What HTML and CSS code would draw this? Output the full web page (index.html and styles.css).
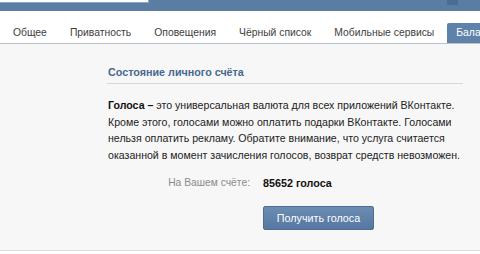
FILE: index.html
```html
<!DOCTYPE html>
<html lang="ru">
<head>
<meta charset="utf-8">
<link rel="stylesheet" href="styles.css">
</head>
<body>
<div class="header">
  <div class="search"></div>
  <div class="header-btn"></div>
</div>
<div class="tabs">
  <div class="tab">Общее</div>
  <div class="tab">Приватность</div>
  <div class="tab">Оповещения</div>
  <div class="tab">Чёрный список</div>
  <div class="tab">Мобильные сервисы</div>
  <div class="tab active">Баланс</div>
</div>
<div class="content">
  <div class="panel">
    <div class="title">Состояние личного счёта</div>
    <p class="text"><b>Голоса –</b> это универсальная валюта для всех приложений ВКонтакте.<br>Кроме этого, голосами можно оплатить подарки ВКонтакте. Голосами<br>нельзя оплатить рекламу. Обратите внимание, что услуга считается<br>оказанной в момент зачисления голосов, возврат средств невозможен.</p>
    <div class="balance">
      <span class="label">На Вашем счёте:</span>
      <span class="value">85652 голоса</span>
    </div>
    <div class="actions">
      <button class="btn">Получить голоса</button>
    </div>
  </div>
</div>
</body>
</html>
```
FILE: styles.css
```css
* { box-sizing: border-box; }
html, body { margin: 0; padding: 0; }
body {
  width: 480px;
  height: 254px;
  overflow: hidden;
  background: #fff;
  font-family: "Liberation Sans", Arial, sans-serif;
  font-size: 10.75px;
  color: #222;
}
.header {
  height: 11px;
  background: #5b7da4;
  display: flex;
  align-items: flex-start;
}
.search {
  width: 149px;
  height: 3px;
  background: #fdfdfd;
  border-right: 1px solid #8fa7c2;
  border-bottom: 1px solid #8fa7c2;
}
.header-btn {
  margin-left: 298px;
  width: 11px;
  height: 5px;
  background: #4a6d93;
}
.tabs {
  height: 33px;
  display: flex;
  align-items: flex-end;
  padding-left: 3px;
  gap: 3px;
  border-bottom: 1px solid #b9c3ce;
  white-space: nowrap;
  overflow: hidden;
  font-size: 10.35px;
}
.tab {
  padding: 0 10px 5px;
  color: #3d3d3d;
  height: 20px;
  display: flex;
  align-items: flex-end;
  flex-shrink: 0;
}
.tab.active {
  background: #5f82a9;
  color: #fff;
  border-radius: 2px 2px 0 0;
  padding-left: 9px;
}
.content {
  background: #f7f7f7;
  height: 207px;
  border-bottom: 1px solid #dcdcdc;
  padding: 22px 17px 0 107px;
}
.title {
  font-weight: bold;
  color: #45688e;
  padding: 0 0 5px 1px;
  border-bottom: 1px solid #d0d8e0;
}
.text {
  margin: 13px 0 0 1px;
  line-height: 16.5px;
  color: #222;
  white-space: nowrap;
  font-size: 10.6px;
}
.text b { color: #111; }
.balance {
  display: flex;
  margin-top: 14px;
}
.label {
  width: 156px;
  text-align: right;
  color: #8a8a8a;
  padding-right: 13px;
  font-size: 10.3px;
}
.value {
  font-weight: bold;
  color: #111;
}
.actions {
  padding-left: 156px;
  margin-top: 17px;
}
.btn {
  width: 111px;
  height: 24px;
  border: 1px solid #4d6d93;
  border-radius: 2px;
  background: linear-gradient(#6a8cb2, #5777a0);
  color: #fff;
  font-family: "Liberation Sans", Arial, sans-serif;
  font-size: 10.75px;
  padding: 0;
}
```
